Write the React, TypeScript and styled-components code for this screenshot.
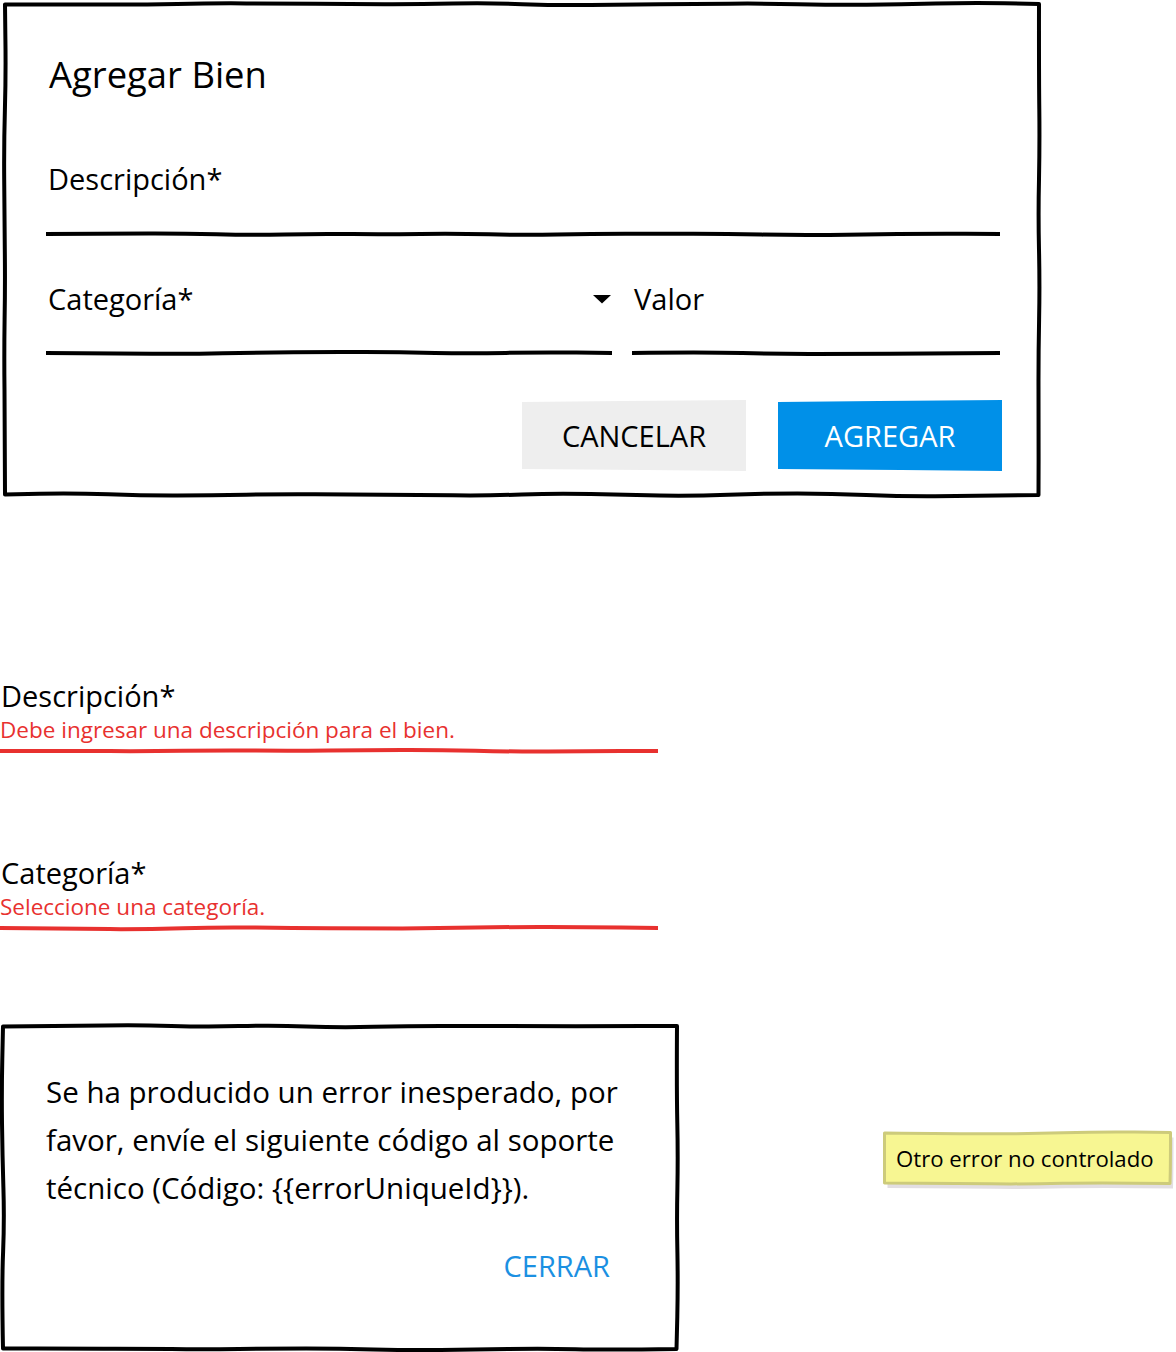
import React from "react";
import styled, { createGlobalStyle } from "styled-components";

const GlobalStyle = createGlobalStyle`
  html, body { margin: 0; padding: 0; background: #ffffff; }
  body {
    font-family: "Open Sans", "Noto Sans", "Liberation Sans", sans-serif;
    color: #000000;
    width: 1176px;
    min-height: 1352px;
  }
`;

/* ---------- sketchy drawing helpers ---------- */
function makeRand(seed: number) {
  let s = seed;
  return () => {
    s = (s * 9301 + 49297) % 233280;
    return s / 233280;
  };
}

const f = (n: number) => n.toFixed(1);

function edge(
  x1: number,
  y1: number,
  x2: number,
  y2: number,
  amp: number,
  rand: () => number,
  first: boolean
): string {
  const len = Math.hypot(x2 - x1, y2 - y1);
  const n = Math.max(2, Math.round(len / 70));
  const nx = -(y2 - y1) / len;
  const ny = (x2 - x1) / len;
  const pts: [number, number][] = [];
  for (let i = 0; i <= n; i++) {
    const t = i / n;
    const o = i === 0 || i === n ? 0 : (rand() - 0.5) * 2 * amp;
    pts.push([x1 + (x2 - x1) * t + nx * o, y1 + (y2 - y1) * t + ny * o]);
  }
  let d = `${first ? "M" : "L"}${f(pts[0][0])} ${f(pts[0][1])}`;
  for (let i = 1; i < n; i++) {
    const mx = (pts[i][0] + pts[i + 1][0]) / 2;
    const my = (pts[i][1] + pts[i + 1][1]) / 2;
    d += ` Q${f(pts[i][0])} ${f(pts[i][1])} ${f(mx)} ${f(my)}`;
  }
  d += ` L${f(pts[n][0])} ${f(pts[n][1])}`;
  return d;
}

function rectPath(w: number, h: number, inset: number, amp: number, seed: number) {
  const r = makeRand(seed);
  const a = inset;
  const bx = w - inset;
  const by = h - inset;
  return (
    edge(a, a + 0.5, bx, a, amp, r, true) +
    " " +
    edge(bx, a, bx - 0.5, by, amp, r, false) +
    " " +
    edge(bx - 0.5, by, a, by - 0.5, amp, r, false) +
    " " +
    edge(a, by - 0.5, a, a + 0.5, amp, r, false) +
    " Z"
  );
}

const FrameSvg = styled.svg`
  position: absolute;
  left: 0;
  top: 0;
  overflow: visible;
  pointer-events: none;
`;

function SketchFrame({
  w,
  h,
  seed,
  color = "#000000",
  strokeWidth = 4,
}: {
  w: number;
  h: number;
  seed: number;
  color?: string;
  strokeWidth?: number;
}) {
  return (
    <FrameSvg width={w} height={h} viewBox={`0 0 ${w} ${h}`} aria-hidden>
      <path
        d={rectPath(w, h, strokeWidth / 2, 1.6, seed)}
        fill="none"
        stroke={color}
        strokeWidth={strokeWidth}
        strokeLinejoin="round"
        strokeLinecap="round"
      />
    </FrameSvg>
  );
}

const LineSvg = styled.svg`
  display: block;
  overflow: visible;
`;

function Underline({
  w,
  seed,
  color = "#000000",
}: {
  w: number;
  seed: number;
  color?: string;
}) {
  const r = makeRand(seed);
  return (
    <LineSvg width={w} height={6} viewBox={`0 0 ${w} 6`} aria-hidden>
      <path
        d={edge(0, 3, w, 3, 1.3, r, true)}
        fill="none"
        stroke={color}
        strokeWidth={4}
        strokeLinecap="butt"
      />
    </LineSvg>
  );
}

/* ---------- page layout ---------- */
const Page = styled.div`
  display: flex;
  flex-direction: column;
  align-items: flex-start;
  width: 1176px;
`;

/* ---------- dialog "Agregar Bien" ---------- */
const Dialog = styled.section`
  position: relative;
  box-sizing: border-box;
  width: 1038px;
  margin: 2px 0 0 3px;
  padding: 50px 41px 26px 43px;
  display: flex;
  flex-direction: column;
`;

const Title = styled.h1`
  margin: 0 0 0 3px;
  font-size: 36.4px;
  line-height: 44px;
  font-weight: 400;
`;

const Field = styled.div<{ $top: number }>`
  display: flex;
  flex-direction: column;
  margin-top: ${(p) => p.$top}px;
`;

const FieldRow = styled.div<{ $after?: number }>`
  display: flex;
  align-items: center;
  height: 36px;
  margin-bottom: ${(p) => p.$after ?? 33}px;
`;

const Label = styled.span`
  font-size: 29px;
  line-height: 36px;
  padding-left: 2px;
  white-space: nowrap;
`;

const Caret = styled.svg`
  margin-left: auto;
  margin-right: 1px;
`;

const TwoCols = styled.div`
  display: grid;
  grid-template-columns: 566px 368px;
  column-gap: 20px;
  margin-top: 44px;
`;

const Actions = styled.div`
  display: flex;
  justify-content: flex-end;
  gap: 32px;
  margin: 44px -2px 0 0;
`;

const Button = styled.button<{ $primary?: boolean }>`
  width: 224px;
  height: 71px;
  border: none;
  padding: 0;
  font-family: inherit;
  font-size: 29px;
  font-weight: 400;
  background: ${(p) => (p.$primary ? "#0090e8" : "#eeeeee")};
  color: ${(p) => (p.$primary ? "#ffffff" : "#000000")};
  clip-path: polygon(
    0 2px,
    45% 1px,
    100% 0,
    100% 100%,
    55% calc(100% - 1px),
    0 calc(100% - 2px)
  );
  cursor: pointer;
`;

/* ---------- validation states ---------- */
const ErrorField = styled.div<{ $top: number }>`
  display: flex;
  flex-direction: column;
  margin-top: ${(p) => p.$top}px;
`;

const PlainLabel = styled.span`
  font-size: 29px;
  line-height: 36px;
  padding-left: 1px;
`;

const ErrorText = styled.span<{ $gap: number; $after: number }>`
  font-size: 22.5px;
  line-height: 26px;
  color: #e8312f;
  margin-top: ${(p) => p.$gap}px;
  margin-bottom: ${(p) => p.$after}px;
`;

/* ---------- bottom row: error dialog + note ---------- */
const BottomRow = styled.div`
  display: flex;
  align-items: flex-start;
  margin-top: 93px;
`;

const ErrorBox = styled.section`
  position: relative;
  box-sizing: border-box;
  width: 678px;
  height: 327px;
  margin-left: 1px;
  padding: 44px 69px 0 45px;
  display: flex;
  flex-direction: column;
`;

const Message = styled.p`
  margin: 0;
  font-size: 29.5px;
  line-height: 48px;
  white-space: nowrap;
`;

const LinkRow = styled.div`
  display: flex;
  justify-content: flex-end;
  margin-top: 36px;
`;

const TextButton = styled.button`
  border: none;
  background: none;
  padding: 0;
  font-family: inherit;
  font-size: 29px;
  line-height: 36px;
  color: #1b90e2;
  cursor: pointer;
`;

const Note = styled.aside`
  position: relative;
  box-sizing: border-box;
  width: 289px;
  height: 54px;
  margin: 107px 0 0 204px;
  padding: 0 0 0 13px;
  display: flex;
  align-items: center;
`;

const NoteText = styled.span`
  position: relative;
  font-size: 22.2px;
  line-height: 26px;
  white-space: nowrap;
  margin-top: 1px;
`;

function StickyShape({ w, h }: { w: number; h: number }) {
  const d = rectPath(w, h, 1.5, 1.2, 17);
  return (
    <FrameSvg width={w + 6} height={h + 6} viewBox={`0 0 ${w + 6} ${h + 6}`} aria-hidden>
      <path d={d} transform="translate(3 5)" fill="#e2dee2" />
      <path
        d={d}
        fill="#f7f692"
        stroke="#cdcb7b"
        strokeWidth={3}
        strokeLinejoin="round"
      />
    </FrameSvg>
  );
}

export default function App() {
  return (
    <>
      <GlobalStyle />
      <Page>
        <Dialog>
          <SketchFrame w={1038} h={495} seed={7} />
          <Title>Agregar Bien</Title>

          <Field $top={65}>
            <FieldRow $after={34}>
              <Label>Descripción*</Label>
            </FieldRow>
            <Underline w={954} seed={3} />
          </Field>

          <TwoCols>
            <Field $top={0}>
              <FieldRow>
                <Label>Categoría*</Label>
                <Caret width="18" height="9" viewBox="0 0 18 9" aria-hidden>
                  <polygon points="0,0 18,0 9,8.5" fill="#000000" />
                </Caret>
              </FieldRow>
              <Underline w={566} seed={11} />
            </Field>
            <Field $top={0}>
              <FieldRow>
                <Label>Valor</Label>
              </FieldRow>
              <Underline w={368} seed={23} />
            </Field>
          </TwoCols>

          <Actions>
            <Button type="button">CANCELAR</Button>
            <Button type="button" $primary>
              AGREGAR
            </Button>
          </Actions>
        </Dialog>

        <ErrorField $top={181}>
          <PlainLabel>Descripción*</PlainLabel>
          <ErrorText $gap={3} $after={5}>
            Debe ingresar una descripción para el bien.
          </ErrorText>
          <Underline w={658} seed={31} color="#e8312f" />
        </ErrorField>

        <ErrorField $top={101}>
          <PlainLabel>Categoría*</PlainLabel>
          <ErrorText $gap={3} $after={5}>
            Seleccione una categoría.
          </ErrorText>
          <Underline w={658} seed={41} color="#e8312f" />
        </ErrorField>

        <BottomRow>
          <ErrorBox>
            <SketchFrame w={678} h={327} seed={53} />
            <Message>
              Se ha producido un error inesperado, por
              <br />
              favor, envíe el siguiente código al soporte
              <br />
              técnico (Código: {"{{errorUniqueId}}"}).
            </Message>
            <LinkRow>
              <TextButton type="button">CERRAR</TextButton>
            </LinkRow>
          </ErrorBox>

          <Note>
            <StickyShape w={289} h={54} />
            <NoteText>Otro error no controlado</NoteText>
          </Note>
        </BottomRow>
      </Page>
    </>
  );
}
